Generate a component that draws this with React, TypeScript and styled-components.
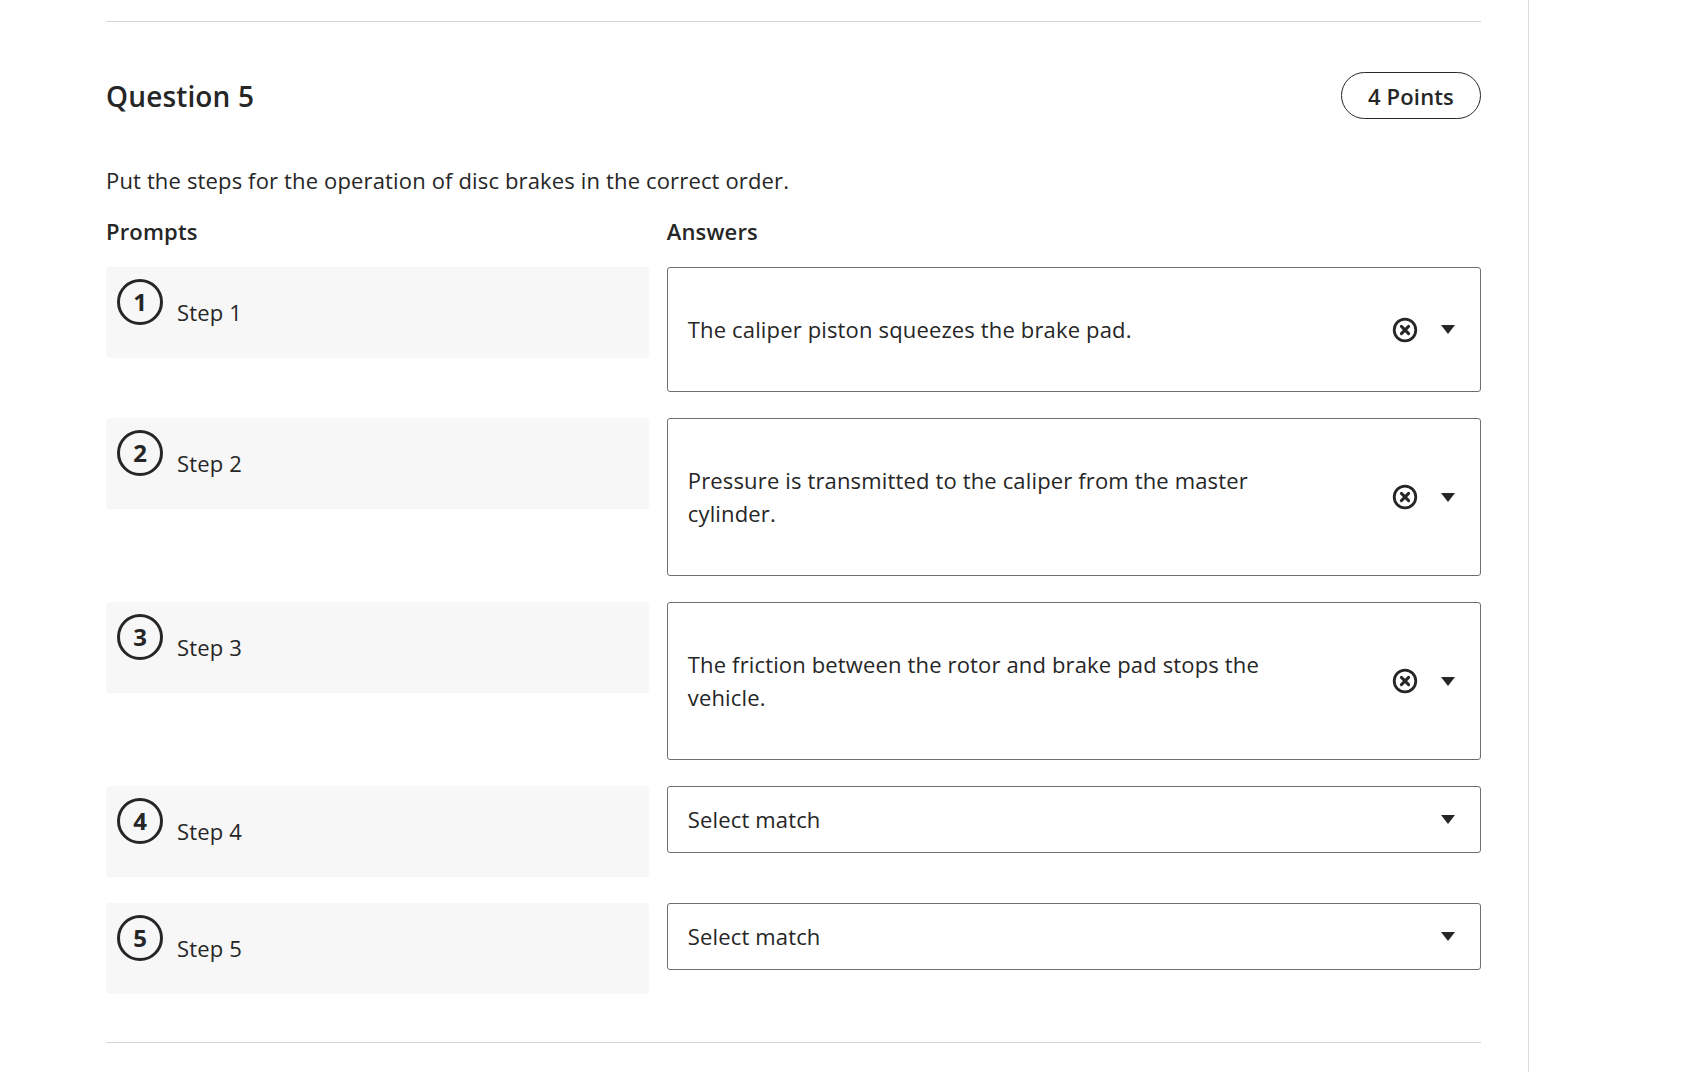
import React from 'react';
import styled, { createGlobalStyle } from 'styled-components';

const Colors = {
  TEXT: '#262626',
  LINE: '#d4d4d4',
  BORDER: '#6f6f6f',
  PROMPT_BG: '#f7f7f7',
  PANEL_LINE: '#dcdcdc',
};

type Match = {
  step: number;
  answer: string | null;
};

const matches: Match[] = [
  { step: 1, answer: 'The caliper piston squeezes the brake pad.' },
  {
    step: 2,
    answer: 'Pressure is transmitted to the caliper from the master cylinder.',
  },
  {
    step: 3,
    answer: 'The friction between the rotor and brake pad stops the vehicle.',
  },
  { step: 4, answer: null },
  { step: 5, answer: null },
];

const ClearIcon = () => (
  <svg width="26" height="26" viewBox="0 0 26 26" aria-hidden>
    <circle
      cx="13"
      cy="13"
      r="10.8"
      fill="none"
      stroke={Colors.TEXT}
      strokeWidth="2.8"
    />
    <path
      d="M9.4 9.4 L16.6 16.6 M16.6 9.4 L9.4 16.6"
      stroke={Colors.TEXT}
      strokeWidth="3"
      strokeLinecap="round"
    />
  </svg>
);

const CaretIcon = () => (
  <svg width="14" height="9" viewBox="0 0 14 9" aria-hidden>
    <path d="M0 0 H14 L7 9 Z" fill={Colors.TEXT} />
  </svg>
);

export default function App() {
  return (
    <React.Fragment>
      <GlobalStyle />
      <Page>
        <Main>
          <Section>
            <Divider />
            <Header>
              <Title>Question 5</Title>
              <PointsPill>4 Points</PointsPill>
            </Header>
            <Description>
              Put the steps for the operation of disc brakes in the correct
              order.
            </Description>
            <MatchGrid>
              <ColumnLabel>Prompts</ColumnLabel>
              <ColumnLabel>Answers</ColumnLabel>
              {matches.map(match => (
                <React.Fragment key={match.step}>
                  <PromptBox>
                    <StepNumber>{match.step}</StepNumber>
                    <StepLabel>Step {match.step}</StepLabel>
                  </PromptBox>
                  <AnswerSelect filled={!!match.answer}>
                    <AnswerText>{match.answer ?? 'Select match'}</AnswerText>
                    <Controls>
                      {match.answer && (
                        <IconButton aria-label="Clear">
                          <ClearIcon />
                        </IconButton>
                      )}
                      <IconButton aria-label="Open">
                        <CaretIcon />
                      </IconButton>
                    </Controls>
                  </AnswerSelect>
                </React.Fragment>
              ))}
            </MatchGrid>
            <BottomDivider />
          </Section>
        </Main>
        <SidePanel />
      </Page>
    </React.Fragment>
  );
}

const GlobalStyle = createGlobalStyle`
  body {
    margin: 0;
    background: #ffffff;
    color: ${Colors.TEXT};
    font-family: 'Open Sans', 'Noto Sans', sans-serif;
    letter-spacing: 0.15px;
  }
  * {
    box-sizing: border-box;
  }
`;

const Page = styled.div`
  display: flex;
  min-height: 1072px;
`;

const Main = styled.main`
  width: 1529px;
  flex-shrink: 0;
  border-right: 1px solid ${Colors.PANEL_LINE};
`;

const SidePanel = styled.aside`
  flex: 1;
`;

const Section = styled.section`
  margin: 0 47px 0 106px;
  display: flex;
  flex-direction: column;
`;

const Divider = styled.hr`
  margin: 21px 0 0;
  border: none;
  border-top: 1px solid ${Colors.LINE};
`;

const BottomDivider = styled(Divider)`
  margin-top: 48px;
`;

const Header = styled.div`
  display: flex;
  align-items: center;
  justify-content: space-between;
  margin-top: 50px;
`;

const Title = styled.h2`
  margin: 0;
  font-size: 28px;
  font-weight: 600;
  line-height: 40px;
`;

const PointsPill = styled.span`
  display: inline-flex;
  align-items: center;
  justify-content: center;
  height: 47px;
  width: 140px;
  border: 1.5px solid ${Colors.TEXT};
  border-radius: 24px;
  font-size: 22px;
  font-weight: 600;
`;

const Description = styled.p`
  margin: 45px 0 0;
  font-size: 22px;
  line-height: 33px;
`;

const MatchGrid = styled.div`
  display: grid;
  grid-template-columns: 2fr 3fr;
  column-gap: 18px;
  row-gap: 26px;
  align-items: start;
  margin-top: 18px;
`;

const ColumnLabel = styled.div`
  font-size: 22px;
  font-weight: 600;
  line-height: 33px;
  margin-bottom: -7px;
`;

const PromptBox = styled.div`
  display: flex;
  align-items: flex-start;
  gap: 14px;
  padding: 12px 11px 29px;
  background: ${Colors.PROMPT_BG};
  border-radius: 3px;
`;

const StepNumber = styled.span`
  display: flex;
  align-items: center;
  justify-content: center;
  width: 46px;
  height: 46px;
  flex-shrink: 0;
  border: 3px solid ${Colors.TEXT};
  border-radius: 50%;
  font-size: 24px;
  font-weight: 700;
  line-height: 1;
  letter-spacing: 0;
`;

const StepLabel = styled.span`
  margin-top: 17px;
  font-size: 22px;
  line-height: 33px;
`;

const AnswerSelect = styled.div<{ filled: boolean }>`
  display: flex;
  align-items: center;
  padding: ${({ filled }) => (filled ? '45px' : '16px')} 25px
    ${({ filled }) => (filled ? '45px' : '16px')} 20px;
  min-height: ${({ filled }) => (filled ? 'auto' : '67px')};
  border: 1px solid ${Colors.BORDER};
  border-radius: 3px;
  background: #ffffff;
`;

const AnswerText = styled.span`
  flex: 1;
  margin-right: 92px;
  font-size: 22px;
  line-height: 33px;
`;

const Controls = styled.div`
  display: flex;
  align-items: center;
  gap: 23px;
`;

const IconButton = styled.span`
  display: flex;
  align-items: center;
  justify-content: center;
  cursor: pointer;
`;
